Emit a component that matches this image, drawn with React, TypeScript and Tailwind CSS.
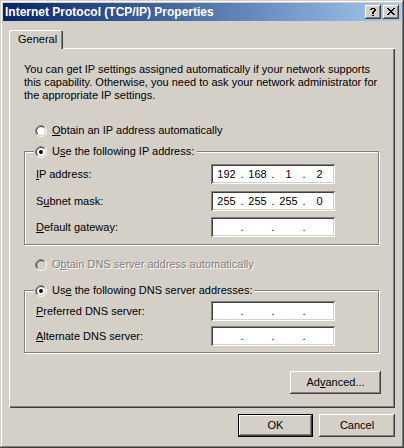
import React from "react";

const raised =
  "shadow-[inset_-1px_-1px_0_#404040,inset_1px_1px_0_#ffffff,inset_-2px_-2px_0_#808080,inset_2px_2px_0_#d4d0c8]";
const sunken =
  "shadow-[inset_1px_1px_0_#808080,inset_-1px_-1px_0_#ffffff,inset_2px_2px_0_#404040,inset_-2px_-2px_0_#d4d0c8]";

function Radio({ checked, disabled }: { checked?: boolean; disabled?: boolean }) {
  const a = 6 - 5.5 * 0.7071;
  const b = 6 + 5.5 * 0.7071;
  const c = 6 - 4.5 * 0.7071;
  const d = 6 + 4.5 * 0.7071;
  return (
    <svg width="12" height="12" viewBox="0 0 12 12" className="shrink-0">
      <circle cx="6" cy="6" r="4.5" fill={disabled ? "#d4d0c8" : "#ffffff"} />
      <path d={`M${a} ${b} A5.5 5.5 0 0 1 ${b} ${a}`} stroke="#808080" fill="none" />
      <path d={`M${b} ${a} A5.5 5.5 0 0 1 ${a} ${b}`} stroke="#ffffff" fill="none" />
      <path d={`M${c} ${d} A4.5 4.5 0 0 1 ${d} ${c}`} stroke="#404040" fill="none" />
      <path d={`M${d} ${c} A4.5 4.5 0 0 1 ${c} ${d}`} stroke="#d4d0c8" fill="none" />
      {checked && <circle cx="6" cy="6" r="2" fill="#000000" />}
    </svg>
  );
}

function IpBox({ parts }: { parts?: string[] }) {
  const p = parts ?? ["", "", "", ""];
  return (
    <div className={`w-[124px] h-[20px] bg-white ${sunken} flex items-center pl-[2px] text-black`}>
      {p.map((s, i) => (
        <React.Fragment key={i}>
          <span className="w-[27px] text-center">{s}</span>
          {i < 3 && <span className="w-[4px] text-center">.</span>}
        </React.Fragment>
      ))}
    </div>
  );
}

function Row({ label, parts, className }: { label: React.ReactNode; parts?: string[]; className?: string }) {
  return (
    <div className={`flex items-center h-[20px] ${className ?? ""}`}>
      <span className="w-[175px]">{label}</span>
      <IpBox parts={parts} />
    </div>
  );
}

function HelpGlyph() {
  const px = [
    [1, 0], [2, 0], [3, 0], [4, 0],
    [0, 1], [1, 1], [4, 1], [5, 1],
    [4, 2], [5, 2],
    [3, 3], [4, 3],
    [2, 4], [3, 4],
    [2, 5], [3, 5],
    [2, 7], [3, 7],
  ];
  return (
    <svg width="6" height="8" viewBox="0 0 6 8" shapeRendering="crispEdges">
      {px.map(([x, y], i) => (
        <rect key={i} x={x} y={y} width="1" height="1" fill="#000" />
      ))}
    </svg>
  );
}

function CloseGlyph() {
  const rows = ["##....##", ".##..##.", "..####..", "...##...", "..####..", ".##..##.", "##....##"];
  return (
    <svg width="8" height="7" viewBox="0 0 8 7" shapeRendering="crispEdges">
      {rows.flatMap((r, y) =>
        r.split("").map((ch, x) =>
          ch === "#" ? <rect key={`${x}-${y}`} x={x} y={y} width="1" height="1" fill="#000" /> : null
        )
      )}
    </svg>
  );
}

export default function App() {
  return (
    <div
      className={`w-[404px] h-[448px] bg-[#d4d0c8] p-[3px] flex flex-col text-[11px] leading-[13px] text-black font-['Liberation_Sans',Arial,sans-serif] shadow-[inset_-1px_-1px_0_#404040,inset_1px_1px_0_#d4d0c8,inset_-2px_-2px_0_#808080,inset_2px_2px_0_#ffffff]`}
    >
      {/* title bar */}
      <div className="h-[18px] flex items-center bg-linear-to-r from-[#0a246a] to-[#a6caf0] pl-[2px] pr-[2px]">
        <span className="flex-1 text-white font-bold text-[12px]">Internet Protocol (TCP/IP) Properties</span>
        <div className="flex gap-[2px]">
          <button className={`w-[16px] h-[14px] bg-[#d4d0c8] ${raised} flex items-center justify-center pb-[1px]`}>
            <HelpGlyph />
          </button>
          <button className={`w-[16px] h-[14px] bg-[#d4d0c8] ${raised} flex items-center justify-center pb-[1px]`}>
            <CloseGlyph />
          </button>
        </div>
      </div>

      <div className="flex flex-col px-[6px] mt-[9px]">
        {/* tab */}
        <div className="relative z-10 -mb-[1px] w-[54px] h-[19px] bg-[#d4d0c8] rounded-t-[2px] shadow-[inset_1px_1px_0_#ffffff,inset_-1px_0_0_#404040,inset_-2px_0_0_#808080] pl-[9px] pt-[3px]">
          General
        </div>

        {/* pane */}
        <div className="h-[360px] flex flex-col shadow-[inset_1px_1px_0_#ffffff,inset_-1px_-1px_0_#404040,inset_-2px_-2px_0_#808080]">
          <p className="mt-[15px] ml-[15px]">
            You can get IP settings assigned automatically if your network supports
            <br />
            this capability. Otherwise, you need to ask your network administrator for
            <br />
            the appropriate IP settings.
          </p>

          <div className="mt-[22px] ml-[26px] flex items-center gap-[5px] h-[13px]">
            <Radio />
            <span>
              <u>O</u>btain an IP address automatically
            </span>
          </div>

          <fieldset className="mt-[8px] ml-[15px] w-[355px] border border-[#808080] shadow-[1px_1px_0_#ffffff,inset_1px_1px_0_#ffffff] pl-[11px] pb-[7px]">
            <legend className="-ml-[2px] bg-[#d4d0c8] pl-[1px] pr-[3px]">
              <span className="flex items-center gap-[5px] h-[13px]">
                <Radio checked />
                <span>
                  U<u>s</u>e the following IP address:
                </span>
              </span>
            </legend>
            <Row className="mt-[6px]" label={<><u>I</u>P address:</>} parts={["192", "168", "1", "2"]} />
            <Row className="mt-[7px]" label={<>S<u>u</u>bnet mask:</>} parts={["255", "255", "255", "0"]} />
            <Row className="mt-[6px]" label={<><u>D</u>efault gateway:</>} />
          </fieldset>

          <div className="mt-[13px] ml-[26px] flex items-center gap-[5px] h-[13px] text-[#808080] [text-shadow:1px_1px_0_#ffffff]">
            <Radio disabled />
            <span>
              O<u>b</u>tain DNS server address automatically
            </span>
          </div>

          <fieldset className="mt-[13px] ml-[15px] w-[355px] border border-[#808080] shadow-[1px_1px_0_#ffffff,inset_1px_1px_0_#ffffff] pl-[11px] pb-[6px]">
            <legend className="-ml-[2px] bg-[#d4d0c8] pl-[1px] pr-[1px]">
              <span className="flex items-center gap-[5px] h-[13px]">
                <Radio checked />
                <span>
                  Us<u>e</u> the following DNS server addresses:
                </span>
              </span>
            </legend>
            <Row className="mt-[4px]" label={<><u>P</u>referred DNS server:</>} />
            <Row className="mt-[5px]" label={<><u>A</u>lternate DNS server:</>} />
          </fieldset>

          <div className="mt-[18px] flex justify-end pr-[14px]">
            <button className={`w-[91px] h-[23px] bg-[#d4d0c8] ${raised} text-[11px]`}>
              Ad<u>v</u>anced...
            </button>
          </div>
        </div>

        {/* bottom buttons */}
        <div className="mt-[6px] flex justify-end gap-[6px]">
          <button className="w-[75px] h-[23px] bg-[#d4d0c8] border border-black shadow-[inset_-1px_-1px_0_#404040,inset_1px_1px_0_#ffffff,inset_-2px_-2px_0_#808080] text-[11px]">
            OK
          </button>
          <button className={`w-[76px] h-[23px] bg-[#d4d0c8] ${raised} text-[11px]`}>Cancel</button>
        </div>
      </div>
    </div>
  );
}
